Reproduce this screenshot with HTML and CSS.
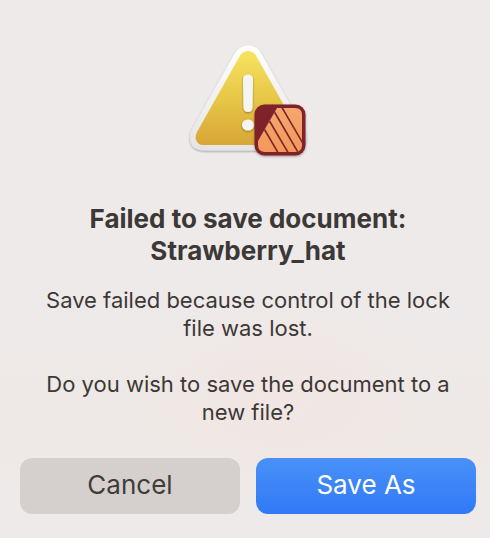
FILE: index.html
```
<!DOCTYPE html>
<html lang="en">
<head>
<meta charset="utf-8">
<meta name="viewport" content="width=device-width, initial-scale=1">
<title>Failed to save document</title>
<link rel="stylesheet" href="styles.css">
</head>
<body>
<main class="dialog" role="alertdialog" aria-labelledby="title" aria-describedby="message">
  <svg class="icon" viewBox="178 35 140 130" aria-hidden="true">
    <defs>
      <linearGradient id="rim" x1="0" y1="0" x2="0" y2="1">
        <stop offset="0" stop-color="#ffffff"/>
        <stop offset="1" stop-color="#e4e4e4"/>
      </linearGradient>
      <linearGradient id="gold" x1="0" y1="0" x2="0" y2="1">
        <stop offset="0" stop-color="#f8e35f"/>
        <stop offset="0.5" stop-color="#e7c748"/>
        <stop offset="1" stop-color="#d8a636"/>
      </linearGradient>
      <linearGradient id="orange" x1="0" y1="0" x2="0" y2="1">
        <stop offset="0" stop-color="#f4a76f"/>
        <stop offset="1" stop-color="#f3985b"/>
      </linearGradient>
      <clipPath id="page">
        <path d="M277 108H295Q302 108 302 115V145Q302 152 295 152H265Q258 152 258 145V141Z"/>
      </clipPath>
      <filter id="shadow" x="-20%" y="-20%" width="140%" height="140%">
        <feDropShadow dx="0" dy="1" stdDeviation="1" flood-color="#000" flood-opacity="0.35"/>
      </filter>
    </defs>
    <path filter="url(#shadow)" fill="url(#rim)" d="M235 53Q239.500 45.500 248 45.500T261 53L304 129Q307 135 306 141Q303 150 293 150.500H203Q193 150 190.500 142Q189 135 192 129Z"/>
    <path fill="url(#gold)" d="M240 55.500Q243 51 248 51T256 55.500L299 132Q301 136 299.500 140Q297 145 292 145H203Q198 145 196 140Q195 136 197 132Z"/>
    <g filter="url(#shadow)" fill="#f5f5f4">
      <path d="M243 79.500Q243 74.500 248 74.500T253 79.500L252.500 107.500Q252 112 248 112T243.500 107.500Z"/>
      <ellipse cx="248" cy="125" rx="6" ry="5.500"/>
    </g>
    <rect filter="url(#shadow)" x="254.500" y="104.500" width="51" height="51" rx="10" fill="#7f2229"/>
    <g clip-path="url(#page)">
      <rect x="258" y="108" width="44" height="44" fill="url(#orange)"/>
      <path fill="none" stroke="#7f2229" stroke-width="1.600" d="M280.500 105L303 143.500M274.500 112L299 154M269.500 121L289.500 155M264.500 129.500L280 156"/>
    </g>
  </svg>
  <h1 class="title" id="title">Failed to save document: Strawberry_hat</h1>
  <div class="message" id="message">
    <p>Save failed because control of the lock file was lost.</p>
    <p>Do you wish to save the document to a new file?</p>
  </div>
  <div class="actions">
    <button class="button" type="button">Cancel</button>
    <button class="button primary" type="button">Save As</button>
  </div>
</main>
</body>
</html>
```
FILE: styles.css
```
* {
  box-sizing: border-box;
}

body {
  margin: 0;
  min-height: 100vh;
  background:
    radial-gradient(ellipse 160px 100px at 58% 74%, #f1e6e3, #f1e6e300),
    linear-gradient(#eeeaea 50%, #eee9e6 80%, #eeeaea);
  color: #3c3836;
  font-family: Inter, "Liberation Sans", sans-serif;
}

.dialog {
  display: flex;
  flex-direction: column;
  padding: 35px 14px 24px 20px;
  text-align: center;
}

.icon {
  align-self: center;
  width: 140px;
  height: 130px;
}

.title {
  margin: 38px 60px 0;
  font-size: 26px;
  font-weight: 700;
  line-height: 32px;
}

.message {
  display: grid;
  gap: 28px;
  margin: 19px 16px 0;
  font-size: 22px;
  line-height: 28px;
}

.message p {
  margin: 0;
}

.actions {
  display: grid;
  grid-template-columns: 1fr 1fr;
  gap: 16px;
  margin-top: 32px;
}

.button {
  height: 56px;
  padding: 0 0 4px;
  border: 0;
  border-radius: 12px;
  background: #d5d0ce;
  color: #3f3c3a;
  font: inherit;
  font-size: 26px;
}

.primary {
  background: linear-gradient(#4991f8, #3179f6);
  color: #fff;
}
```
